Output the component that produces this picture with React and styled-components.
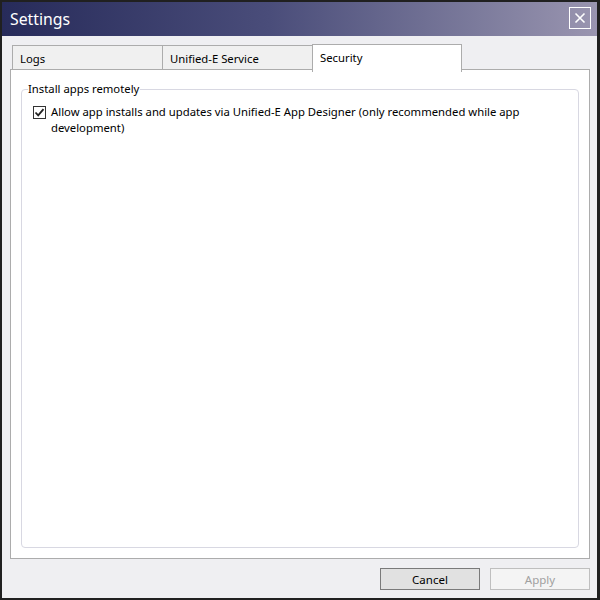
import React, { useState } from "react";
import styled, { createGlobalStyle } from "styled-components";

const GlobalStyle = createGlobalStyle`
  html, body {
    margin: 0;
    padding: 0;
    background: #1e1e1e;
  }
  * {
    box-sizing: border-box;
  }
`;

const Window = styled.div`
  width: 600px;
  height: 600px;
  border: 2px solid #202020;
  border-right-width: 3px;
  background: #efeff2;
  display: flex;
  flex-direction: column;
  font-family: "Noto Sans", "Open Sans", sans-serif;
  font-size: 11.3px;
  color: #000;
`;

const TitleBar = styled.div`
  height: 34px;
  flex: none;
  display: flex;
  align-items: center;
  justify-content: space-between;
  padding: 0 6px 0 8px;
  background: linear-gradient(90deg, #272b5a 0%, #4a4d7a 45%, #7c7b9c 80%, #9a95b0 100%);
`;

const Title = styled.div`
  color: #fff;
  font-size: 15.8px;
  font-family: "Noto Sans", sans-serif;
  margin-top: -1px;
`;

const CloseButton = styled.button`
  width: 22px;
  height: 22px;
  border: 1px solid #fff;
  background: transparent;
  padding: 0;
  display: flex;
  align-items: center;
  justify-content: center;
  margin-top: -2px;
  cursor: pointer;
`;

const Body = styled.div`
  flex: 1;
  display: flex;
  flex-direction: column;
  padding: 8px 7px 8px 8px;
`;

const TabStrip = styled.div`
  display: flex;
  height: 26px;
  padding-left: 2px;
  align-items: flex-end;
  position: relative;
  z-index: 1;
`;

const Tab = styled.div`
  width: ${(p) => (p.$active ? "150px" : "151px")};
  height: ${(p) => (p.$active ? "28px" : "25px")};
  margin-right: ${(p) => (p.$active ? "0" : "-1px")};
  margin-bottom: ${(p) => (p.$active ? "-2px" : "0")};
  border: 1px solid #acacac;
  border-bottom: ${(p) => (p.$active ? "none" : "1px solid #acacac")};
  background: ${(p) => (p.$active ? "#fff" : "#f0f0f0")};
  padding: 6px 0 0 7px;
  line-height: 14px;
  position: relative;
  z-index: ${(p) => (p.$active ? 2 : 1)};
`;

const Panel = styled.div`
  flex: 1;
  background: #fff;
  border: 1px solid #acacac;
  padding: 12px 10px 10px 10px;
  display: flex;
  margin-top: -1px;
`;

const Group = styled.fieldset`
  flex: 1;
  margin: 0;
  border: 1px solid #d8d8e2;
  border-radius: 4px;
  padding: 0;
  min-width: 0;
`;

const Legend = styled.legend`
  padding: 0 1px 0 0;
  margin-left: 6px;
  line-height: 14px;
`;

const GroupContent = styled.div`
  padding: 8px 10px 0 11px;
`;

const CheckRow = styled.label`
  display: flex;
  align-items: flex-start;
  gap: 5px;
  line-height: 16px;
`;

const Box = styled.span`
  width: 13px;
  height: 13px;
  flex: none;
  border: 1px solid #333;
  background: #fff;
  margin-top: 2px;
  display: flex;
  align-items: center;
  justify-content: center;
`;

const Footer = styled.div`
  display: flex;
  justify-content: flex-end;
  gap: 10px;
  padding-top: 9px;
`;

const Button = styled.button`
  width: 100px;
  height: 22px;
  font-family: inherit;
  font-size: 11.5px;
  padding: 0;
  border: 1px solid ${(p) => (p.disabled ? "#bfbfbf" : "#adadad")};
  background: ${(p) => (p.disabled ? "#f4f4f4" : "#e1e1e1")};
  color: ${(p) => (p.disabled ? "#a0a0a0" : "#000")};
  outline: ${(p) => (p.disabled ? "none" : "1px solid #7a7a7a")};
  outline-offset: -1px;
`;

export default function App() {
  const [checked, setChecked] = useState(true);
  return (
    <>
      <GlobalStyle />
      <Window>
        <TitleBar>
          <Title>Settings</Title>
          <CloseButton aria-label="Close">
            <svg width="12" height="12" viewBox="0 0 12 12">
              <path d="M1.5 1.5 L10.5 10.5 M10.5 1.5 L1.5 10.5" stroke="#fff" strokeWidth="1.6" />
            </svg>
          </CloseButton>
        </TitleBar>
        <Body>
          <TabStrip>
            <Tab>Logs</Tab>
            <Tab>Unified-E Service</Tab>
            <Tab $active>Security</Tab>
          </TabStrip>
          <Panel>
            <Group>
              <Legend>Install apps remotely</Legend>
              <GroupContent>
                <CheckRow onClick={() => setChecked(!checked)}>
                  <Box>
                    {checked && (
                      <svg width="11" height="11" viewBox="0 0 11 11">
                        <path d="M1.5 5.5 L4.2 8.3 L9.5 2.2" fill="none" stroke="#222" strokeWidth="1.8" />
                      </svg>
                    )}
                  </Box>
                  <span>
                    Allow app installs and updates via Unified-E App Designer (only recommended while app
                    development)
                  </span>
                </CheckRow>
              </GroupContent>
            </Group>
          </Panel>
          <Footer>
            <Button>Cancel</Button>
            <Button disabled>Apply</Button>
          </Footer>
        </Body>
      </Window>
    </>
  );
}
